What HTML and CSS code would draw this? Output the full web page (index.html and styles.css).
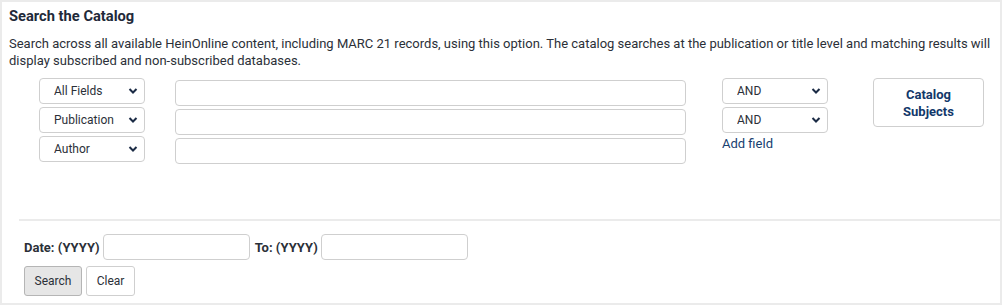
FILE: index.html
```html
<!DOCTYPE html>
<html lang="en">
<head>
  <meta charset="UTF-8">
  <title>Search the Catalog</title>
  <link rel="stylesheet" href="styles.css">
</head>
<body>
  <div class="panel">
    <!-- Intro -->
    <div class="intro">
      <h3>Search the Catalog</h3>
      <p>Search across all available HeinOnline content, including MARC 21 records, using this option. The catalog searches at the publication or title level and matching results will display subscribed and non-subscribed databases.</p>
    </div>

    <!-- Field rows -->
    <div class="search-grid">
      <div class="col fields">
        <span class="sel"><select><option>All Fields</option></select><svg viewBox="0 0 10 8"><path d="M1.5 2 L5 5.5 L8.5 2"/></svg></span>
        <span class="sel"><select><option>Publication</option></select><svg viewBox="0 0 10 8"><path d="M1.5 2 L5 5.5 L8.5 2"/></svg></span>
        <span class="sel"><select><option>Author</option></select><svg viewBox="0 0 10 8"><path d="M1.5 2 L5 5.5 L8.5 2"/></svg></span>
      </div>
      <div class="col terms">
        <input type="text" class="term">
        <input type="text" class="term">
        <input type="text" class="term">
      </div>
      <div class="col ops">
        <span class="sel"><select><option>AND</option></select><svg viewBox="0 0 10 8"><path d="M1.5 2 L5 5.5 L8.5 2"/></svg></span>
        <span class="sel"><select><option>AND</option></select><svg viewBox="0 0 10 8"><path d="M1.5 2 L5 5.5 L8.5 2"/></svg></span>
        <a href="#" class="add-field">Add field</a>
      </div>
      <div class="col side">
        <button class="subjects">Catalog<br>Subjects</button>
      </div>
    </div>

    <!-- Date limits and actions -->
    <div class="limits">
      <div class="date-row">
        <label>Date: (YYYY)</label>
        <input type="text" class="year">
        <label>To: (YYYY)</label>
        <input type="text" class="year">
      </div>
      <div class="actions">
        <button class="btn search">Search</button>
        <button class="btn clear">Clear</button>
      </div>
    </div>
  </div>
</body>
</html>
```

FILE: styles.css
```css
* { box-sizing: border-box; }
body {
  margin: 0;
  font-family: Roboto, "Liberation Sans", sans-serif;
  color: #2b3038;
  background: #fff;
}
.panel {
  height: 305px;
  border: 2px solid #ebebeb;
  background: #fff;
}
/* Intro text */
.intro { padding: 4px 8px 0 7px; }
.intro h3 {
  margin: 0;
  font-size: 14.7px;
  font-weight: 700;
  line-height: 20px;
  color: #1f2a3a;
}
.intro p {
  margin: 9px 0 0 0;
  font-size: 13px;
  line-height: 17px;
}
/* Search rows */
.search-grid {
  display: flex;
  align-items: flex-start;
  margin: 9px 0 0 37px;
}
.col {
  display: flex;
  flex-direction: column;
  gap: 3px;
}
.fields { width: 106px; }
.terms { width: 511px; margin: 2px 0 0 30px; }
.ops { width: 106px; margin-left: 36px; }
.side { margin-left: 45px; }
.sel { position: relative; display: block; height: 26px; }
.sel select {
  appearance: none;
  -webkit-appearance: none;
  width: 100%;
  height: 26px;
  padding: 0 0 0 14px;
  border: 1px solid #cfcfcf;
  border-radius: 4px;
  background: #fff;
  font-family: inherit;
  font-size: 12px;
  color: #2b3038;
}
.sel svg {
  position: absolute;
  right: 7px;
  top: 9px;
  width: 10px;
  height: 8px;
  fill: none;
  stroke: #1b2b45;
  stroke-width: 2;
  pointer-events: none;
}
.term {
  height: 26px;
  border: 1px solid #cfcfcf;
  border-radius: 4px;
  background: #fff;
}
.add-field {
  font-size: 13px;
  color: #17406f;
  text-decoration: none;
}
.subjects {
  width: 111px;
  height: 49px;
  border: 1px solid #cfcfcf;
  border-radius: 4px;
  background: #fff;
  font-family: inherit;
  font-size: 13px;
  font-weight: 700;
  line-height: 17px;
  color: #12386a;
}
/* Date limits */
.limits {
  margin: 55px 0 0 17px;
  border-top: 2px solid #ebebeb;
  padding: 13px 0 0 5px;
}
.date-row {
  display: flex;
  align-items: center;
  gap: 3px;
}
.date-row label {
  font-size: 13px;
  font-weight: 700;
  color: #2b3038;
}
.date-row label + .year + label { margin-left: 2px; }
.year {
  width: 147px;
  height: 26px;
  border: 1px solid #cfcfcf;
  border-radius: 4px;
  background: #fff;
}
.actions {
  display: flex;
  gap: 4px;
  margin-top: 6px;
}
.btn {
  height: 30px;
  padding: 0;
  border: 1px solid #cfcfcf;
  border-radius: 3px;
  background: #fff;
  font-family: inherit;
  font-size: 12px;
  color: #2b3038;
}
.btn.search {
  width: 58px;
  background: #e6e6e6;
  border-color: #b5b5b5;
}
.btn.clear { width: 49px; }
```
